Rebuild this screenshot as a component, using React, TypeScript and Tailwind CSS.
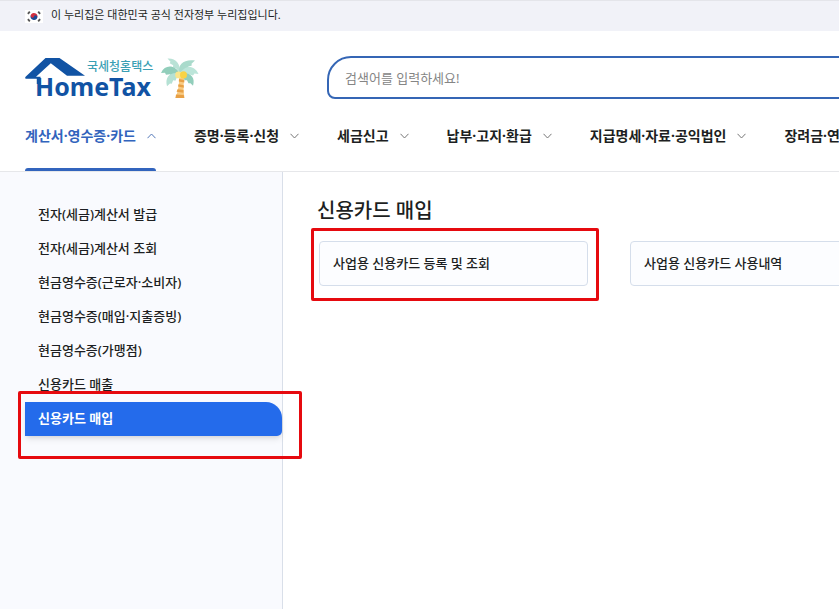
import React from 'react';

const menuItems = [
  { label: '계산서·영수증·카드', active: true },
  { label: '증명·등록·신청' },
  { label: '세금신고' },
  { label: '납부·고지·환급' },
  { label: '지급명세·자료·공익법인' },
  { label: '장려금·연말정산·기부금' },
];

const sideItems = [
  { label: '전자(세금)계산서 발급' },
  { label: '전자(세금)계산서 조회' },
  { label: '현금영수증(근로자·소비자)' },
  { label: '현금영수증(매입·지출증빙)' },
  { label: '현금영수증(가맹점)' },
  { label: '신용카드 매출' },
  { label: '신용카드 매입', active: true },
];

const cards = ['사업용 신용카드 등록 및 조회', '사업용 신용카드 사용내역'];

function Flag() {
  return (
    <svg width="18" height="13" viewBox="0 0 18 13" aria-hidden="true">
      <rect width="18" height="13" fill="#fff" />
      <g transform="rotate(20 9 6.5)">
        <path d="M5.6 6.5a3.4 3.4 0 0 1 6.8 0z" fill="#d2303f" />
        <path d="M5.6 6.5a3.4 3.4 0 0 0 6.8 0z" fill="#1f4b94" />
        <circle cx="7.3" cy="6.5" r="1.7" fill="#d2303f" />
        <circle cx="10.7" cy="6.5" r="1.7" fill="#1f4b94" />
      </g>
      <g stroke="#555" strokeWidth="1.8">
        <path d="M2.9 3.9 4.8 1.6M13.2 11.4l1.9-2.3M13.2 1.6l1.9 2.3M2.9 9.1l1.9 2.3" />
      </g>
    </svg>
  );
}

function Logo() {
  return (
    <svg width="130" height="48" viewBox="0 0 130 48" role="img" aria-label="국세청홈택스 HomeTax">
      <path
        d="M.6 20.800 20.500 2H34.500L60 19.800H42L25.800 7.200 11 20.800H15.500V28H11.800V22.800H1Q-.4 22.300.6 20.800Z"
        fill="#1153a4"
      />
      <text x="62" y="15" fontSize="12" fill="#3a9fb4" fontWeight="500" fontFamily="'Noto Sans CJK KR', sans-serif">
        국세청홈택스
      </text>
      <text x="10" y="40" fontSize="25" fill="#1153a4" fontWeight="700" fontFamily="'Noto Sans', sans-serif">
        HomeTax
      </text>
    </svg>
  );
}

function PalmTree() {
  return (
    <svg width="38" height="43" viewBox="0 0 38 42" preserveAspectRatio="none" aria-hidden="true">
      <path d="M18 20h5.500c-1 7-1.500 13 0 21h-9C17.500 33 18.300 27 18 20Z" fill="#f9cb83" />
      <path
        d="m18 22.500 5.300 1v2.300l-5.500-1zM17.500 27.500l5.300 1v2.400l-5.800-1zM16.500 32.500l6 .800v2.500l-6.900-1zM15 37.500l7.800.6.400 2.900h-8.700z"
        fill="#e8a045"
      />
      <path d="M19.500 17C19.500 8 15 2 6.500 2.500l3 3-.8 1.500 3.500 2-.2 2 3.500 1.500z" fill="#b9e2d6" />
      <path d="M18.500 17C16.500 8 23 3 34 4.500l-3.500 3 .3 1.700-3.800 1.300-.2 2.200-3.800 1z" fill="#a9dacb" />
      <path d="M19.500 18C14 8 4 8 0 16.500l4-.2 1 2 4-.5 1.200 1.700 3.800-.8 1.500 1z" fill="#92cebb" />
      <path d="M18.500 18C23 9 33 8 37.500 17.500l-4-.4-1.500 2-3.500-1-1.500 1.700-3.500-1z" fill="#bce5d9" />
      <path d="M19 17C9.500 15 3.500 20 6 29.500l3-2.700 1.700.3 1.500-3.300 2.200.3 1.500-3z" fill="#b5e1d4" />
      <path d="M19 17c9-2 16 3 13 12l-2.500-2.500-2 .1-1.500-3-2.500.2-1-3z" fill="#92cebb" />
      <circle cx="17.500" cy="18.500" r="3.300" fill="#fae58c" />
      <circle cx="22.500" cy="18.500" r="3.500" fill="#f8d344" />
    </svg>
  );
}

function Chevron({ up = false }: { up?: boolean }) {
  return (
    <svg width="9" height="6" viewBox="0 0 9 6" fill="none" stroke="currentColor" aria-hidden="true">
      <path d={up ? 'M.5 5.200 4.500 1l4 4.200' : 'M.5.800 4.500 5l4-4.200'} />
    </svg>
  );
}

export default function App() {
  return (
    <div className="flex min-h-screen flex-col overflow-hidden bg-white font-['Noto_Sans','Noto_Sans_CJK_KR',sans-serif] text-[#1d1f22]">
      <div className="flex h-[31px] items-center gap-2 border-t border-[#e4e5ea] bg-[#f1f2f8] pl-[25px] text-[11px]">
        <Flag />
        <span className="pb-0.5">이 누리집은 대한민국 공식 전자정부 누리집입니다.</span>
      </div>

      <header className="flex flex-col overflow-hidden border-b border-[#e6e7ea]">
        <div className="mt-[25px] flex h-[43px] items-start pl-[25px]">
          <a href="#" className="flex w-[302px] shrink-0 items-start gap-1.5">
            <Logo />
            <PalmTree />
          </a>
          <input
            type="search"
            aria-label="검색어"
            placeholder="검색어를 입력하세요!"
            className="h-[43px] w-[560px] shrink-0 rounded-tl-[24px] rounded-bl-lg border-2 border-[#3566b5] px-4 text-[13px] outline-none placeholder:text-[#858585]"
          />
        </div>
        <nav className="flex gap-[38px] pl-[25px] whitespace-nowrap">
          {menuItems.map((item) => (
            <button
              key={item.label}
              type="button"
              aria-expanded={!!item.active}
              className={
                item.active
                  ? 'flex h-[72px] shrink-0 flex-col justify-between text-sm font-bold text-[#3264bd]'
                  : 'flex h-[72px] shrink-0 flex-col justify-between text-sm font-bold'
              }
            >
              <span className="flex items-center gap-[11px] pt-[27px]">
                {item.label}
                <span className={item.active ? 'text-[#5478b8]' : 'text-[#777]'}>
                  <Chevron up={item.active} />
                </span>
              </span>
              {item.active && <span className="h-[3px] w-full rounded-t-sm bg-[#3264bd]" />}
            </button>
          ))}
        </nav>
      </header>

      <div className="flex flex-1">
        <aside className="relative w-[283px] shrink-0 border-r border-[#d9dfe9] bg-[#f9fafe] pt-[26px] pl-[25px]">
          <ul className="text-[13px] font-medium">
            {sideItems.map((item) => (
              <li key={item.label}>
                <a
                  href="#"
                  className={
                    item.active
                      ? 'flex h-[34px] items-center rounded-tr-[16px] rounded-br-[5px] bg-[#246beb] pl-[13px] font-bold text-white shadow-md'
                      : 'flex h-[34px] items-center pl-[13px]'
                  }
                >
                  {item.label}
                </a>
              </li>
            ))}
          </ul>
          <div className="pointer-events-none absolute top-[219px] left-[18px] h-[68px] w-[284px] rounded-xs border-3 border-[#e60a0f]" />
        </aside>

        <main className="min-w-0 flex-1 overflow-hidden pt-[25px] pl-[34px]">
          <h1 className="text-xl leading-7 font-medium">신용카드 매입</h1>
          <div className="mt-4 flex gap-[42px] pl-0.5">
            {cards.map((label, i) => (
              <div key={label} className="relative shrink-0">
                <a
                  href="#"
                  className="flex h-[45px] w-[269px] items-center rounded border border-[#d5deeb] bg-[#fcfdff] px-[13px] text-[13px] font-medium"
                >
                  {label}
                </a>
                {i === 0 && (
                  <div className="pointer-events-none absolute -top-[13px] -right-[11px] -bottom-[15px] -left-2 rounded-xs border-3 border-[#e60a0f]" />
                )}
              </div>
            ))}
          </div>
        </main>
      </div>
    </div>
  );
}
